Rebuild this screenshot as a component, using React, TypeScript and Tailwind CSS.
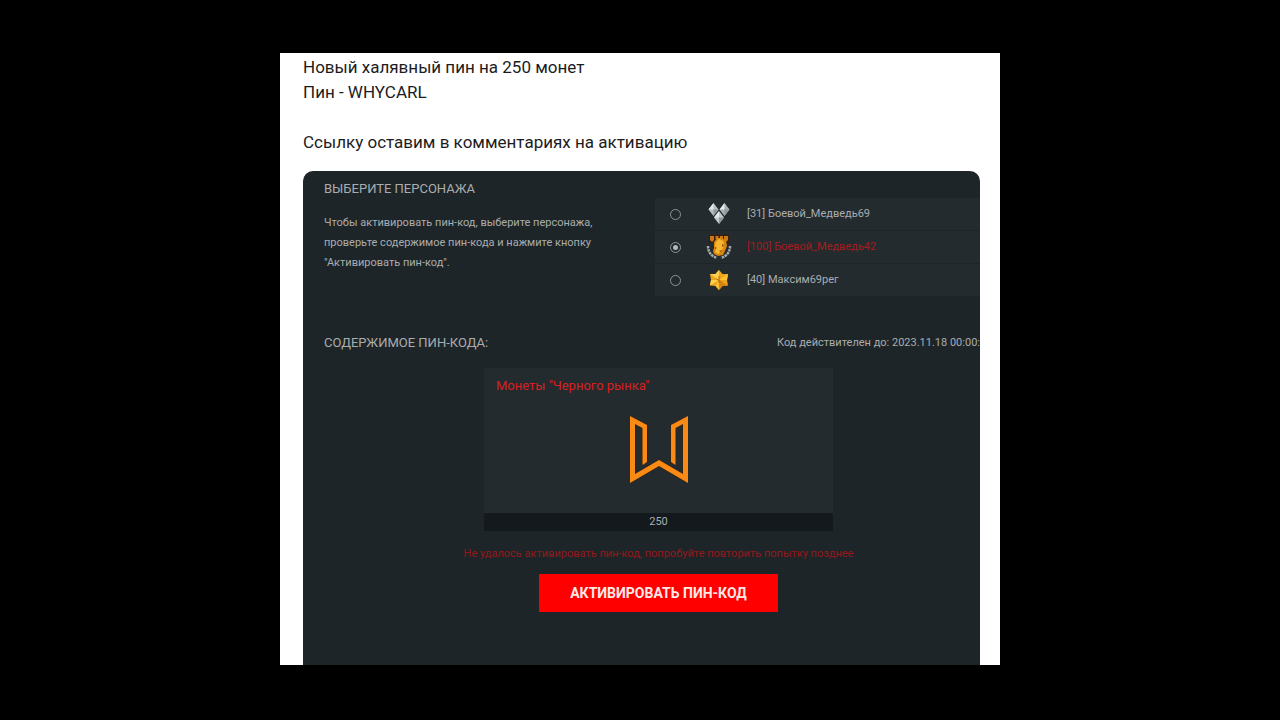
import React, { useState } from "react";

interface CharacterInterface {
  id: string;
  level: number;
  name: string;
  icon: React.ReactNode;
}

function DiamondsIcon() {
  return (
    <svg viewBox="0 0 28 28" className="h-7 w-7" aria-hidden="true">
      <path d="M8.500 3l5 6.500-5 6.500-5-6.500z" fill="#b9bfc3" />
      <path d="M19.500 3l5 6.500-5 6.500-5-6.500z" fill="#a9b0b5" />
      <path d="M14 11l5 6.500-5 6.500-5-6.500z" fill="#c3c9cd" />
      <path d="M8.500 3v6.500h-5zM19.500 3v6.500h-5zM14 11v6.500H9z" fill="#e4e8ea" />
      <path d="M8.500 16V9.500h5zM19.500 16V9.500h5zM14 24v-6.500h5z" fill="#8f979c" />
    </svg>
  );
}

function LaurelIcon() {
  return (
    <svg viewBox="0 0 28 28" className="h-7 w-7" aria-hidden="true">
      <path d="M4 2h20v8h-3l-2-3h-10l-2 3H4z" fill="#3a1c08" />
      <path d="M5 3h4v4l-2 2-2-2zM19 3h4v4l-2 2-2-2zM10.500 3h3v3h-3zM15 3h3v3h-3z" fill="#c97a12" />
      <path
        d="M3 13c0 6 3 10 9 12M25 13c0 6-3 10-9 12"
        fill="none"
        stroke="#a4a9ab"
        strokeWidth="2.500"
        strokeDasharray="2.500 0.700"
      />
      <path d="M9 9l3-4h5l4 3 1 5-2 5-2 4-5 1-4-2-1-3 1-3z" fill="#d9860f" />
      <path d="M11 9l3-3 4 2 1 3-1 4-2 4-3 2-3-2 1-3-1-3z" fill="#f7b62e" />
      <path d="M17 11l2 1-2 2zM14 18l3-1-1 2zM10 14l2 1-2 1z" fill="#8a480a" />
    </svg>
  );
}

function StarIcon() {
  return (
    <svg viewBox="0 0 28 28" className="h-7 w-7" aria-hidden="true">
      <path d="M14 4l3.500 4 5.500 0-1 6 1 5.500-5.500.5-3.500 4-3.500-4-5.500-.5 1-5.500-1-6h5.500z" fill="#eea41b" />
      <path d="M14 4v10L5 8h5.500zM5 19.500L14 14H6z" fill="#ffd04d" />
      <path d="M14 14l9-6-1 6zM14 14v10l-3.500-4z" fill="#ffc034" />
      <path d="M14 14l9 5.500-5.500.5-3.500 4z" fill="#d68412" />
      <path d="M14 10v7M11.500 13l5 3" stroke="#b96b06" strokeWidth="1" />
    </svg>
  );
}

function CoinLogo() {
  return (
    <svg viewBox="0 0 58 68" className="h-[68px] w-[58px]" aria-hidden="true">
      <path
        d="M0 0L17 9V46L12.500 49V12L5 8V58L29 44L53 58V8L45.500 12V49L41 46V9L58 0V67L29 50L0 67Z"
        fill="#f98a16"
        stroke="#3d2008"
        strokeWidth="1"
        paintOrder="stroke"
      />
    </svg>
  );
}

const characters: CharacterInterface[] = [
  { id: "c1", level: 31, name: "Боевой_Медведь69", icon: <DiamondsIcon /> },
  { id: "c2", level: 100, name: "Боевой_Медведь42", icon: <LaurelIcon /> },
  { id: "c3", level: 40, name: "Максим69рег", icon: <StarIcon /> },
];

function CharacterRow(props: {
  character: CharacterInterface;
  checked: boolean;
  onSelect: () => void;
}) {
  const { character, checked, onSelect } = props;
  return (
    <label
      htmlFor={character.id}
      className={`flex h-8 items-center bg-[#242b2f] pl-[15px] text-[11px] ${
        checked ? "text-[#a31c1e]" : "text-[#a9adaf]"
      }`}
    >
      <input
        id={character.id}
        type="radio"
        name="character"
        checked={checked}
        onChange={onSelect}
        className="h-[11px] w-[11px] shrink-0 appearance-none rounded-full border border-[#8d9294] checked:bg-[#b4b8ba] checked:bg-clip-content checked:p-[2px]"
      />
      <span className="mr-3.5 ml-6">{character.icon}</span>
      <span className="leading-5 whitespace-nowrap">
        [{character.level}] {character.name}
      </span>
    </label>
  );
}

function PinPanel() {
  const [selected, setSelected] = useState("c2");

  return (
    <section className="rounded-t-[10px] bg-[#1e2528] pb-[53px] font-[Roboto,sans-serif] text-[#a9adaf]">
      {/* character choice */}
      <div className="flex justify-between pl-[21px]">
        <div className="w-[280px] pt-2">
          <h2 className="text-[13px] leading-5">ВЫБЕРИТЕ ПЕРСОНАЖА</h2>
          <p className="mt-3.5 text-[11px] leading-5 whitespace-nowrap">
            Чтобы активировать пин-код, выберите персонажа,
            <br />
            проверьте содержимое пин-кода и нажмите кнопку
            <br />
            "Активировать пин-код".
          </p>
        </div>
        <div className="mt-[27px] flex w-[325px] flex-col gap-px">
          {characters.map((character) => (
            <CharacterRow
              key={character.id}
              character={character}
              checked={selected === character.id}
              onSelect={() => setSelected(character.id)}
            />
          ))}
        </div>
      </div>

      {/* pin content */}
      <div className="mt-[37px] flex justify-between pl-[21px]">
        <h2 className="text-[13px] leading-5">СОДЕРЖИМОЕ ПИН-КОДА:</h2>
        <p className="text-[11px] leading-5 whitespace-nowrap">
          Код действителен до: 2023.11.18 00:00:
        </p>
      </div>

      <div className="mt-[15px] flex flex-col items-center pl-[34px]">
        <div className="w-[349px] bg-[#242b2f]">
          <h3 className="px-3 pt-2 text-[13px] leading-5 text-[#d8201f]">
            Монеты "Черного рынка"
          </h3>
          <div className="mt-5 flex h-[97px] justify-center">
            <CoinLogo />
          </div>
          <p className="h-[18px] bg-[#13191c] text-center text-[11px] leading-[18px]">250</p>
        </div>
        <p className="mt-[13px] text-[11px] leading-5 whitespace-nowrap text-[#92191c]">
          Не удалось активировать пин-код, попробуйте повторить попытку позднее
        </p>
        <button
          type="button"
          className="mt-2.5 h-[38px] w-[239px] bg-[#fe0000] text-sm font-bold text-[#ffe9e6]"
        >
          АКТИВИРОВАТЬ ПИН-КОД
        </button>
      </div>
    </section>
  );
}

function App() {
  return (
    <main className="flex min-h-screen items-start justify-center bg-black pt-[53px]">
      <article className="w-full max-w-[720px] bg-white pt-0.5 pr-5 pl-[23px]">
        <div className="font-[Roboto,sans-serif] text-[17px] leading-[25px] text-[#1c1c1e]">
          <p>Новый халявный пин на 250 монет</p>
          <p>Пин - WHYCARL</p>
          <p className="mt-[25px] mb-4">Ссылку оставим в комментариях на активацию</p>
        </div>
        <PinPanel />
      </article>
    </main>
  );
}

export default App;
